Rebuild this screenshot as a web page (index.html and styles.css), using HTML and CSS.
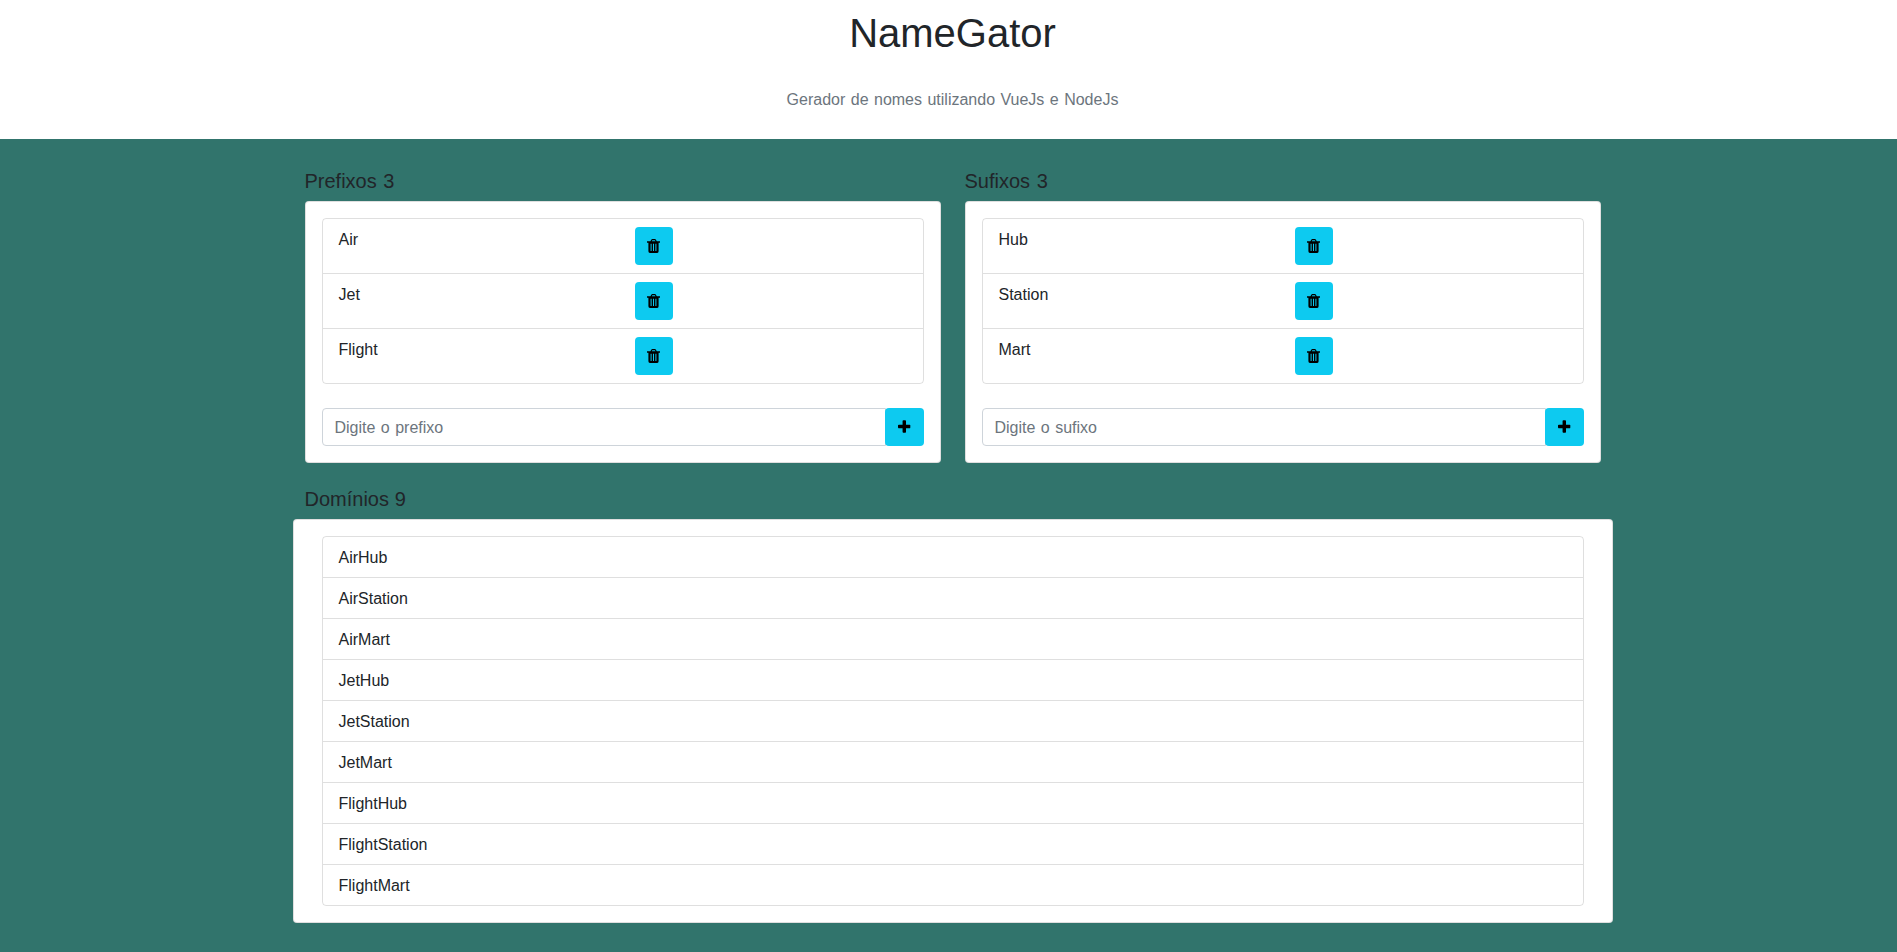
FILE: index.html
```html
<!DOCTYPE html>
<html lang="pt-BR">
<head>
<meta charset="utf-8">
<title>NameGator</title>
<link rel="stylesheet" href="styles.css">
</head>
<body>
<svg class="sprite" aria-hidden="true">
  <symbol id="trash" viewBox="0 0 13 16"><path fill-rule="evenodd" d="M0 3.300H3.400L4.300 1.700Q4.600 1.100 5.300 1.100H7.900Q8.600 1.100 8.900 1.700L9.800 3.300H13V4.700H11.600V13.300Q11.600 15 10.200 15H3Q1.400 15 1.400 13.300V4.700H0ZM4.800 3.300H8.500L7.900 2.200H5.300ZM3.600 5.700V12.900H4.600V5.700ZM6 5.700V12.900H7V5.700ZM8.400 5.700V12.900H9.400V5.700Z"/></symbol>
  <symbol id="plus" viewBox="192 0 1408 1792"><path d="M1600 736v192q0 40-28 68t-68 28h-416v416q0 40-28 68t-68 28h-192q-40 0-68-28t-28-68v-416h-416q-40 0-68-28t-28-68v-192q0-40 28-68t68-28h416v-416q0-40 28-68t68-28h192q40 0 68 28t28 68v416h416q40 0 68 28t28 68z"/></symbol>
</svg>
<header class="header">
  <h1>NameGator</h1>
  <h6>Gerador de nomes utilizando VueJs e NodeJs</h6>
</header>
<main class="main">
  <div class="container">
    <div class="columns">
      <section>
        <h5>Prefixos <span>3</span></h5>
        <div class="card">
          <ul class="list">
            <li class="item split"><span>Air</span><div><button class="btn"><svg><use href="#trash"/></svg></button></div></li>
            <li class="item split"><span>Jet</span><div><button class="btn"><svg><use href="#trash"/></svg></button></div></li>
            <li class="item split"><span>Flight</span><div><button class="btn"><svg><use href="#trash"/></svg></button></div></li>
          </ul>
          <div class="group"><input class="field" type="text" placeholder="Digite o prefixo"><button class="btn add"><svg><use href="#plus"/></svg></button></div>
        </div>
      </section>
      <section>
        <h5>Sufixos <span>3</span></h5>
        <div class="card">
          <ul class="list">
            <li class="item split"><span>Hub</span><div><button class="btn"><svg><use href="#trash"/></svg></button></div></li>
            <li class="item split"><span>Station</span><div><button class="btn"><svg><use href="#trash"/></svg></button></div></li>
            <li class="item split"><span>Mart</span><div><button class="btn"><svg><use href="#trash"/></svg></button></div></li>
          </ul>
          <div class="group"><input class="field" type="text" placeholder="Digite o sufixo"><button class="btn add"><svg><use href="#plus"/></svg></button></div>
        </div>
      </section>
    </div>
    <section class="domains">
      <h5>Domínios <span>9</span></h5>
      <div class="card wide">
        <ul class="list">
          <li class="item">AirHub</li>
          <li class="item">AirStation</li>
          <li class="item">AirMart</li>
          <li class="item">JetHub</li>
          <li class="item">JetStation</li>
          <li class="item">JetMart</li>
          <li class="item">FlightHub</li>
          <li class="item">FlightStation</li>
          <li class="item">FlightMart</li>
        </ul>
      </div>
    </section>
  </div>
</main>
</body>
</html>
```
FILE: styles.css
```css
*, *::before, *::after { box-sizing: border-box; }

body {
  margin: 0;
  height: 952px;
  overflow: hidden;
  display: flex;
  flex-direction: column;
  font: 16px/24px "Liberation Sans", Arial, sans-serif;
  color: #212529;
  background: #fff;
}

h1, h5, h6, ul { margin: 0; padding: 0; font-weight: 400; }

.sprite { display: none; }

.header {
  flex: none;
  height: 139px;
  padding: 9px 0 0 8px;
  text-align: center;
}
.header h1 { font-size: 40px; line-height: 48px; }
.header h6 { margin-top: 31px; font-size: 16px; line-height: 24px; word-spacing: 1px; color: #6c757d; }

.main {
  flex: 1;
  padding: 30px 0 0 9px;
  background: #31746c;
}
.container { width: 1320px; margin: 0 auto; }
.columns { display: grid; grid-template-columns: 1fr 1fr; gap: 24px; padding: 0 12px; }

h5 { margin-bottom: 8px; font-size: 20px; line-height: 24px; word-spacing: 1px; text-indent: -0.5px; }

.card {
  padding: 16px;
  border: 1px solid rgba(0, 0, 0, .125);
  border-radius: 4px;
  background: #fff;
}
.card.wide { padding: 16px 28px; }
.domains { margin-top: 24px; }
.domains h5 { padding-left: 12px; word-spacing: 0.3px; }

.list { list-style: none; border: 1px solid rgba(0, 0, 0, .125); border-radius: 4px; }
.item { padding: 9px 16px 7px; text-indent: -0.5px; }
.item + .item { border-top: 1px solid rgba(0, 0, 0, .125); }
.split { display: grid; grid-template-columns: 1fr 1fr; column-gap: 24px; }
.split div { height: 38px; margin: -1px 0 1px; }

.btn {
  display: flex;
  align-items: center;
  justify-content: center;
  width: 38px;
  height: 38px;
  padding: 0 1px 0 0;
  border: 0;
  border-radius: 4px;
  background: #0dcaf0;
  color: #000;
}
.btn svg { flex: none; width: 13px; height: 16px; fill: currentColor; }

.group { display: flex; margin-top: 24px; }
.field {
  flex: 1;
  min-width: 0;
  height: 38px;
  padding: 7px 12px 5px 11.5px;
  border: 1px solid #ced4da;
  border-radius: 4px 0 0 4px;
  font: inherit;
  word-spacing: 1px;
  background: #fff;
}
.field::placeholder { color: #6c757d; opacity: 1; }
.btn.add { width: 39px; margin-left: -1px; padding: 0; position: relative; }
.add svg { width: 12.57px; }
```
